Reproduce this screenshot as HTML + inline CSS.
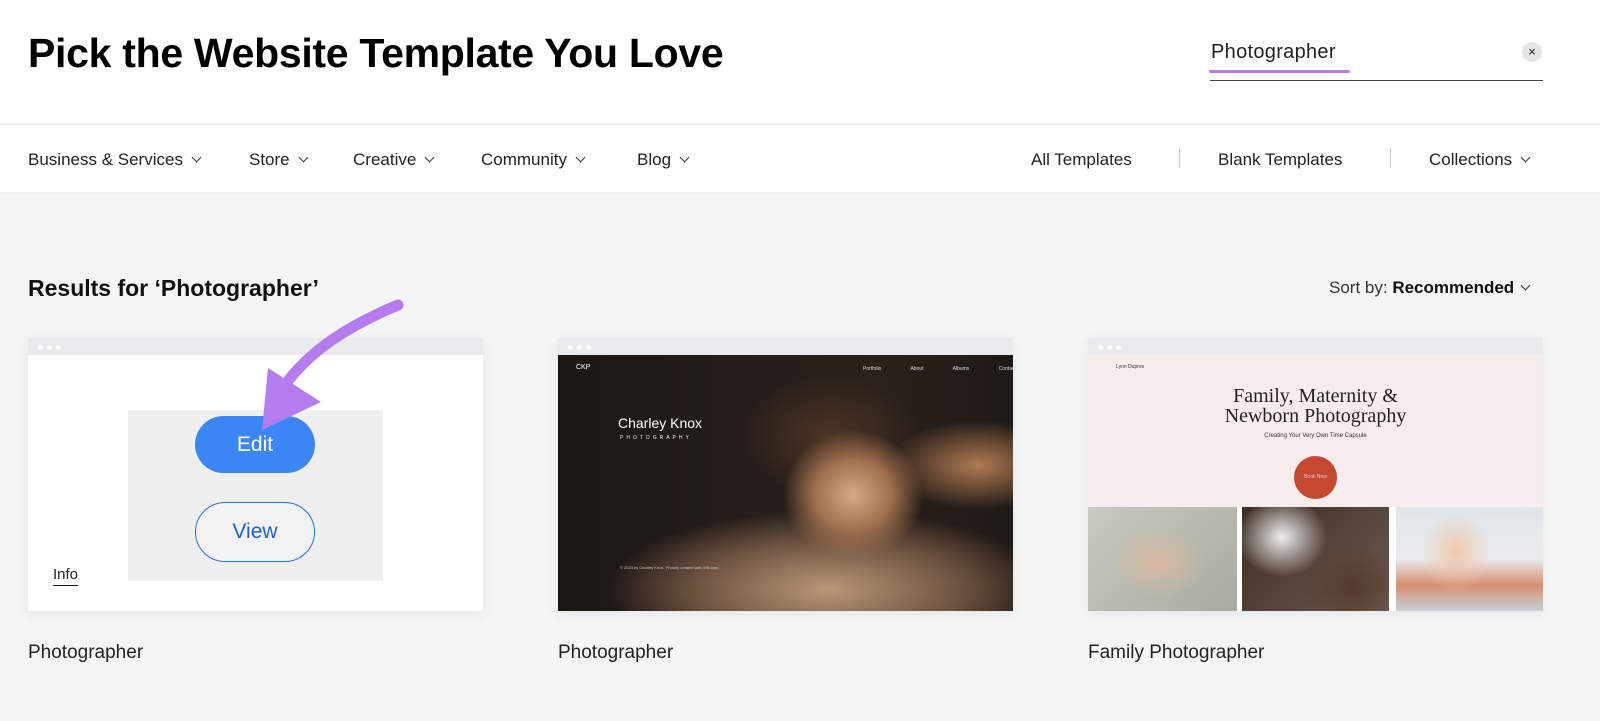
<!DOCTYPE html>
<html><head><meta charset="utf-8"><style>
*{margin:0;padding:0;box-sizing:border-box}
body{width:1600px;height:721px;background:#f4f5f5;font-family:"Liberation Sans",sans-serif;color:#161616;position:relative;overflow:hidden}
.abs{position:absolute}
.hdr{left:0;top:0;width:1600px;height:123px;background:#fff}
.nav{left:0;top:124px;width:1600px;height:68px;background:#fff;border-top:1px solid #e8e8e8;box-shadow:0 2px 4px rgba(0,0,0,.04)}
h1{position:absolute;left:28px;top:30px;font-size:41px;font-weight:700;letter-spacing:-0.3px;color:#000;white-space:nowrap}
.ni{position:absolute;top:150px;font-size:17px;color:#222;white-space:nowrap}
.chev{display:inline-block;width:7px;height:7px;border-right:1.5px solid #333;border-bottom:1.5px solid #333;transform:rotate(45deg);margin-left:10px;position:relative;top:-4px}
.sep{position:absolute;top:148px;width:1px;height:20px;background:#ccc}
.card{position:absolute;top:338px;width:455px;height:273px;background:#fff;box-shadow:0 4px 14px rgba(0,0,0,.06)}
.bar{position:absolute;left:0;top:0;width:100%;height:17px;background:#e9eaeb}
.dot{position:absolute;top:7px;width:5px;height:5px;border-radius:50%;background:#fff}
.lbl{position:absolute;top:642px;font-size:19px;color:#222}
</style></head><body>
<div class="abs hdr"></div>
<h1>Pick the Website Template You Love</h1>
<div class="abs" style="left:1211px;top:41px;font-size:20px;color:#222;letter-spacing:.3px">Photographer</div>
<div class="abs" style="left:1209px;top:70px;width:141px;height:3px;background:#b57cf0;border-radius:2px"></div>
<div class="abs" style="left:1210px;top:80px;width:333px;height:1px;background:#444"></div>
<div class="abs" style="left:1522px;top:42px;width:20px;height:20px;border-radius:50%;background:#e4e4e4;font-size:13px;text-align:center;line-height:20px;color:#222">×</div>
<div class="abs nav"></div>
<div class="ni" style="left:28px">Business &amp; Services<span class="chev"></span></div>
<div class="ni" style="left:249px">Store<span class="chev"></span></div>
<div class="ni" style="left:353px">Creative<span class="chev"></span></div>
<div class="ni" style="left:481px">Community<span class="chev"></span></div>
<div class="ni" style="left:637px">Blog<span class="chev"></span></div>
<div class="ni" style="left:1031px">All Templates</div>
<div class="sep" style="left:1179px"></div>
<div class="ni" style="left:1218px">Blank Templates</div>
<div class="sep" style="left:1390px"></div>
<div class="ni" style="left:1429px">Collections<span class="chev"></span></div>

<div class="abs" style="left:28px;top:275px;font-size:23px;font-weight:700;color:#111">Results for ‘Photographer’</div>
<div class="abs" style="left:1329px;top:278px;font-size:17px;color:#333;white-space:nowrap">Sort by: <b style="color:#111">Recommended</b><span class="chev" style="margin-left:8px"></span></div>

<!-- card 1 -->
<div class="card" style="left:28px">
 <div class="bar"><div class="dot" style="left:10px"></div><div class="dot" style="left:19px"></div><div class="dot" style="left:28px"></div></div>
 <div class="abs" style="left:100px;top:72px;width:255px;height:171px;background:#efefef"></div>
 <div class="abs" style="left:167px;top:78px;width:120px;height:57px;border-radius:29px;background:#3b86f5;color:#fff;font-size:21px;text-align:center;line-height:57px">Edit</div>
 <div class="abs" style="left:167px;top:164px;width:120px;height:60px;border-radius:30px;border:1px solid #2a6fd6;color:#1f5fc8;font-size:21px;text-align:center;line-height:58px;background:rgba(255,255,255,.2)">View</div>
 <div class="abs" style="left:25px;top:228px;font-size:15px;color:#222;border-bottom:1px solid #111;padding-bottom:2px">Info</div>
</div>
<svg class="abs" style="left:0;top:0" width="600" height="500">
 <path d="M398 305 C350 325 310 350 285 385" stroke="#b57cf0" stroke-width="11" fill="none" stroke-linecap="round"/>
 <polygon points="268,368 321,402 262,430" fill="#b57cf0"/>
</svg>

<!-- card 2 -->
<div class="card" style="left:558px">
 <div class="bar"><div class="dot" style="left:10px"></div><div class="dot" style="left:19px"></div><div class="dot" style="left:28px"></div></div>
 <div class="abs" style="left:0;top:17px;width:455px;height:256px;background:radial-gradient(ellipse 70px 65px at 295px 140px,#d8a985 0%,#a06f4e 55%,transparent 100%),radial-gradient(ellipse 90px 45px at 420px 110px,#b07a52 0%,transparent 100%),radial-gradient(ellipse 220px 80px at 270px 235px,#b89878 0%,#6e5340 60%,transparent 100%),radial-gradient(ellipse 90px 60px at 270px 80px,#4a3424 0%,transparent 100%),linear-gradient(90deg,#1c1714 0%,#241d19 40%,#2a211b 70%,#1f1915 100%)"></div>
 <div class="abs" style="left:18px;top:26px;font-size:7px;color:#fff">CKP</div>
 <div class="abs" style="left:305px;top:28px;font-size:5px;color:#ddd;word-spacing:28px;white-space:nowrap">Portfolio About Albums Contact</div>
 <div class="abs" style="left:60px;top:77px;font-size:14px;color:#fff">Charley Knox</div>
 <div class="abs" style="left:62px;top:97px;font-size:5px;color:#eee;letter-spacing:3px">PHOTOGRAPHY</div>
 <div class="abs" style="left:62px;top:227px;font-size:4px;color:#ccc;white-space:nowrap">© 2023 by Charley Knox. Proudly created with Wix.com</div>
</div>

<!-- card 3 -->
<div class="card" style="left:1088px">
 <div class="bar"><div class="dot" style="left:10px"></div><div class="dot" style="left:19px"></div><div class="dot" style="left:28px"></div></div>
 <div class="abs" style="left:0;top:17px;width:455px;height:152px;background:#f8eded"></div>
 <div class="abs" style="left:28px;top:26px;font-size:5px;color:#333">Lynn Dupres</div>
 <div class="abs" style="left:0;top:48px;width:455px;text-align:center;font-family:'Liberation Serif',serif;font-size:20px;line-height:20px;color:#222">Family, Maternity &amp;<br>Newborn Photography</div>
 <div class="abs" style="left:0;top:95px;width:455px;text-align:center;font-size:6px;color:#333">Creating Your Very Own Time Capsule</div>
 <div class="abs" style="left:206px;top:118px;width:43px;height:43px;border-radius:50%;background:#c5482f;color:#fbd;font-size:5px;text-align:center;line-height:43px">Book Now</div>
 <div class="abs" style="left:0;top:169px;width:149px;height:104px;background:radial-gradient(ellipse 50px 35px at 70px 55px,#d8b8a0,transparent),linear-gradient(135deg,#c7cac0,#a7ab9f)"></div>
 <div class="abs" style="left:154px;top:169px;width:147px;height:104px;background:radial-gradient(ellipse 45px 40px at 40px 30px,#eee,transparent),radial-gradient(ellipse 50px 40px at 110px 80px,#553a2c,transparent),linear-gradient(135deg,#3d2c24,#6b5a4e)"></div>
 <div class="abs" style="left:308px;top:169px;width:147px;height:104px;background:radial-gradient(ellipse 35px 40px at 60px 45px,#f0c8b0,transparent),linear-gradient(180deg,#dfe6ea 0%,#e9ecee 50%,#d88f70 75%,#c7d0d6 100%)"></div>
</div>

<div class="lbl" style="left:28px">Photographer</div>
<div class="lbl" style="left:558px">Photographer</div>
<div class="lbl" style="left:1088px">Family Photographer</div>
</body></html>
